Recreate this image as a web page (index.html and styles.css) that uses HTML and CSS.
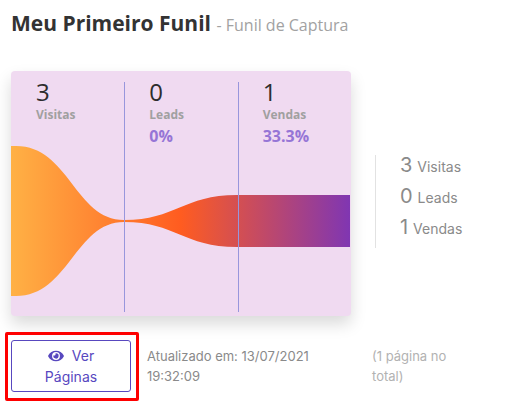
FILE: index.html
```
<!DOCTYPE html>
<html lang="pt-BR">
<head>
    <meta charset="UTF-8">
    <meta name="viewport" content="width=device-width, initial-scale=1.0">
    <title>Meu Primeiro Funil</title>
    <link rel="stylesheet" href="styles.css">
</head>
<body>
    <main class="page">
        <h1 class="title">Meu Primeiro Funil <small>- Funil de Captura</small></h1>

        <section class="overview">
            <div class="funnel">
                <svg class="funnel-graph" viewBox="0 0 340 245" preserveAspectRatio="none" aria-hidden="true">
                    <defs>
                        <linearGradient id="flow" x1="0" x2="1" y1="0" y2="0">
                            <stop offset="0" stop-color="#ffb145" />
                            <stop offset="0.5" stop-color="#ff5c20" />
                            <stop offset="1" stop-color="#8036b2" />
                        </linearGradient>
                    </defs>
                    <path fill="url(#flow)" d="M0 75 H5 C58 75 64 149 113 149 C165 149 172 124 226 124 H339 V176 H226 C172 176 165 151 113 151 C64 151 58 225 5 225 H0 Z" />
                </svg>
                <div class="step">
                    <span class="step-value">3</span>
                    <span class="step-name">Visitas</span>
                </div>
                <div class="step">
                    <span class="step-value">0</span>
                    <span class="step-name">Leads</span>
                    <span class="step-rate">0%</span>
                </div>
                <div class="step">
                    <span class="step-value">1</span>
                    <span class="step-name">Vendas</span>
                    <span class="step-rate">33.3%</span>
                </div>
            </div>
            <ul class="totals">
                <li><span>3</span> Visitas</li>
                <li><span>0</span> Leads</li>
                <li><span>1</span> Vendas</li>
            </ul>
        </section>

        <footer class="details">
            <div class="action">
                <button type="button" class="btn">
                    <svg class="eye" viewBox="0 0 576 512" aria-hidden="true">
                        <path fill="currentColor" d="M572.5 241.4C518.3 135.6 410.9 64 288 64S57.7 135.6 3.5 241.4a32.4 32.4 0 0 0 0 29.2C57.7 376.4 165.1 448 288 448s230.3-71.6 284.5-177.4a32.4 32.4 0 0 0 0-29.2zM288 400a144 144 0 1 1 144-144 143.900 143.900 0 0 1-144 144zm0-240a95.300 95.300 0 0 0-25.300 3.800 47.900 47.900 0 0 1-66.900 66.900A95.800 95.800 0 1 0 288 160z" />
                    </svg>
                    Ver Páginas
                </button>
                <span class="highlight"></span>
            </div>
            <p class="updated">Atualizado em: 13/07/2021 19:32:09</p>
            <p class="count">(1 página no total)</p>
        </footer>
    </main>
</body>
</html>
```
FILE: styles.css
```
body {
    margin: 0;
    background-color: #fff;
    color: #8a8a8a;
    font-family: Inter, sans-serif;
    font-size: 13px;
    line-height: 20px;
}

.page {
    padding: 7px 11px 16px;
}

.title {
    margin: 0 0 30px;
    font-family: "Open Sans", sans-serif;
    font-size: 21px;
    font-weight: 700;
    line-height: 32px;
    color: #333;
}

.title small {
    font-size: 16px;
    font-weight: 400;
    color: #a2a2a2;
}

.overview {
    display: grid;
    grid-template-columns: 17fr 6fr;
    gap: 24px;
    align-items: center;
}

.funnel {
    position: relative;
    display: grid;
    grid-template-columns: repeat(3, 1fr);
    min-height: 230px;
    padding: 11px 0 4px;
    background-color: #f0daf1;
    border-radius: 4px;
    box-shadow: 0 8px 16px rgba(0, 0, 0, 0.15);
}

.funnel-graph {
    position: absolute;
    inset: 0;
    width: 100%;
    height: 100%;
}

.step {
    position: relative;
    display: flex;
    flex-direction: column;
    padding-left: 24px;
    border-left: 1px solid #9896dc;
    font-family: "Open Sans", sans-serif;
}

.step:first-of-type {
    border-left-color: transparent;
}

.step-value {
    font-size: 24px;
    line-height: 20px;
    color: #2d2d2d;
}

.step-name {
    margin-top: 4px;
    font-size: 12px;
    font-weight: 700;
    line-height: 18px;
    color: #a0a0a0;
}

.step-rate {
    font-size: 16px;
    font-weight: 700;
    line-height: 24px;
    color: #9675d6;
}

.totals {
    margin: 16px 0 0;
    padding: 0 0 0 24px;
    border-left: 1px solid #e2e2e2;
    list-style: none;
    font-size: 14px;
    line-height: 23px;
}

.totals li {
    padding-bottom: 8px;
}

.totals span {
    margin-right: 1px;
    font-size: 20px;
    line-height: 20px;
}

.details {
    display: grid;
    grid-template-columns: 120px 209fr 123fr;
    gap: 16px;
    margin-top: 24px;
}

.details p {
    margin: 0;
    padding: 6px 24px 0 0;
}

.details .count {
    color: #b2b2b2;
}

.action {
    position: relative;
}

.btn {
    width: 100%;
    padding: 4px 24px;
    background-color: #fff;
    border: 1px solid #5848bf;
    border-radius: 3px;
    color: #5848bf;
    font-family: inherit;
    font-size: 14px;
    line-height: 21px;
    cursor: pointer;
}

.eye {
    width: 16px;
    height: 14px;
    margin-right: 4px;
    vertical-align: -2px;
}

.highlight {
    position: absolute;
    inset: -8px -8px -9px -6px;
    border: 3px solid #fe0000;
    border-radius: 2px;
    pointer-events: none;
}
```
